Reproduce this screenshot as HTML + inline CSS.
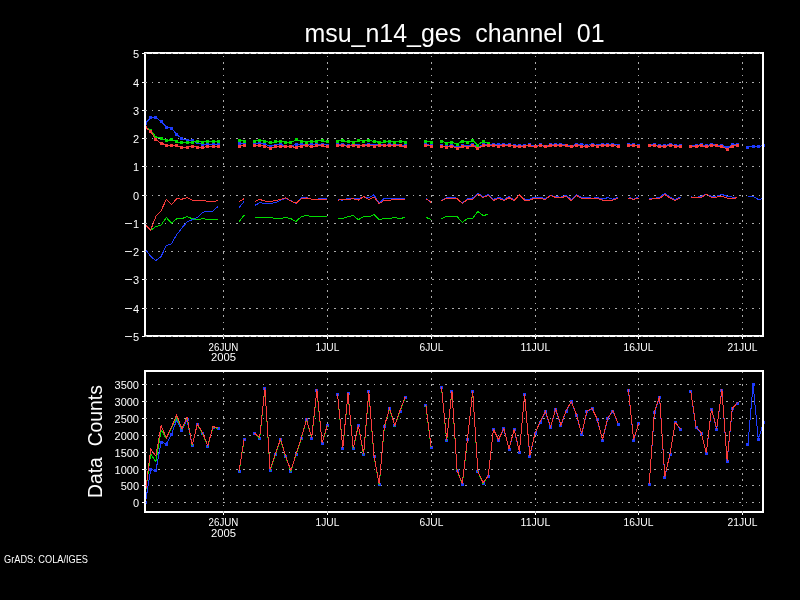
<!DOCTYPE html>
<html><head><meta charset="utf-8"><title>msu_n14_ges channel 01</title>
<style>html,body{margin:0;padding:0;background:#000;overflow:hidden}svg{display:block}</style></head>
<body>
<svg width="800" height="600" viewBox="0 0 800 600">
<rect width="800" height="600" fill="#000"/>
<defs><clipPath id="fc"><path d="M144 52h620v2h-620zM144 335h620v2h-620zM144 52h2v285h-2zM762 52h2v285h-2zM144 370h620v2h-620zM144 511h620v2h-620zM144 370h2v143h-2zM762 370h2v143h-2z"/></clipPath></defs>
<g id="grid">
<g stroke="#aaaaaa" stroke-width="1" fill="none" shape-rendering="crispEdges" stroke-dasharray="1.6 4.93">
<line x1="145" x2="763" y1="336.5" y2="336.5"/>
<line x1="145" x2="763" y1="308.5" y2="308.5"/>
<line x1="145" x2="763" y1="279.5" y2="279.5"/>
<line x1="145" x2="763" y1="251.5" y2="251.5"/>
<line x1="145" x2="763" y1="223.5" y2="223.5"/>
<line x1="145" x2="763" y1="195.5" y2="195.5"/>
<line x1="145" x2="763" y1="166.5" y2="166.5"/>
<line x1="145" x2="763" y1="138.5" y2="138.5"/>
<line x1="145" x2="763" y1="110.5" y2="110.5"/>
<line x1="145" x2="763" y1="82.5" y2="82.5"/>
<line x1="145" x2="763" y1="53.5" y2="53.5"/>
<line x1="145" x2="763" y1="502.5" y2="502.5"/>
<line x1="145" x2="763" y1="485.5" y2="485.5"/>
<line x1="145" x2="763" y1="469.5" y2="469.5"/>
<line x1="145" x2="763" y1="452.5" y2="452.5"/>
<line x1="145" x2="763" y1="435.5" y2="435.5"/>
<line x1="145" x2="763" y1="418.5" y2="418.5"/>
<line x1="145" x2="763" y1="401.5" y2="401.5"/>
<line x1="145" x2="763" y1="384.5" y2="384.5"/>
</g>
<g stroke="#aaaaaa" stroke-width="1" fill="none" shape-rendering="crispEdges" stroke-dasharray="1.6 4.733">
<line x1="223.5" x2="223.5" y1="52" y2="337" stroke-dashoffset="2.533"/>
<line x1="223.5" x2="223.5" y1="370" y2="513" stroke-dashoffset="4.533"/>
<line x1="327.5" x2="327.5" y1="52" y2="337" stroke-dashoffset="2.533"/>
<line x1="327.5" x2="327.5" y1="370" y2="513" stroke-dashoffset="4.533"/>
<line x1="431.5" x2="431.5" y1="52" y2="337" stroke-dashoffset="2.533"/>
<line x1="431.5" x2="431.5" y1="370" y2="513" stroke-dashoffset="4.533"/>
<line x1="535.5" x2="535.5" y1="52" y2="337" stroke-dashoffset="2.533"/>
<line x1="535.5" x2="535.5" y1="370" y2="513" stroke-dashoffset="4.533"/>
<line x1="638.5" x2="638.5" y1="52" y2="337" stroke-dashoffset="2.533"/>
<line x1="638.5" x2="638.5" y1="370" y2="513" stroke-dashoffset="4.533"/>
<line x1="742.5" x2="742.5" y1="52" y2="337" stroke-dashoffset="2.533"/>
<line x1="742.5" x2="742.5" y1="370" y2="513" stroke-dashoffset="4.533"/>
</g>
</g>
<g fill="none" stroke-width="1" shape-rendering="crispEdges">
<polyline points="145.5,123.2 150.7,117.7 155.9,117.7 161.1,121.5 166.3,127.0 171.5,128.2 176.7,134.5 181.9,138.7 187.0,140.2 192.2,140.8 197.4,142.7 202.6,144.2 207.8,144.2 213.0,144.0 218.2,144.4" stroke="#1e3cff"/>
<polyline points="239.0,143.8 244.2,143.6" stroke="#1e3cff"/>
<polyline points="254.6,143.6 259.7,143.4 264.9,144.0 270.1,146.4 275.3,145.0 280.5,144.4 285.7,146.0 290.9,146.4 296.1,144.0 301.3,144.2 306.5,144.6 311.7,144.8 316.9,144.2 322.1,144.0 327.3,145.2" stroke="#1e3cff"/>
<polyline points="337.6,144.9 342.8,144.7 348.0,145.5 353.2,144.6 358.4,145.1 363.6,145.1 368.8,144.4 374.0,145.2 379.2,144.3 384.4,145.3 389.6,144.7 394.8,144.4 400.0,145.1 405.1,145.3" stroke="#1e3cff"/>
<polyline points="425.9,144.8 431.1,145.2" stroke="#1e3cff"/>
<polyline points="441.5,145.5 446.7,146.9 451.9,144.9 457.1,147.5 462.3,145.7 467.5,146.0 472.7,144.3 477.9,147.3 483.0,144.3 488.2,144.2 493.4,144.5 498.6,144.8 503.8,144.2 509.0,144.5 514.2,145.6 519.4,145.6 524.6,145.2 529.8,144.9 535.0,146.3 540.2,144.6 545.4,146.0 550.6,144.5 555.7,144.4 560.9,144.3 566.1,145.1 571.3,146.1 576.5,144.2 581.7,144.9 586.9,145.2 592.1,144.7 597.3,145.2 602.5,144.4 607.7,144.1 612.9,144.2 618.1,145.3" stroke="#1e3cff"/>
<polyline points="628.4,144.9 633.6,144.9 638.8,145.7" stroke="#1e3cff"/>
<polyline points="649.2,145.2 654.4,144.7 659.6,145.7 664.8,145.6 670.0,144.2 675.2,145.5 680.4,145.3" stroke="#1e3cff"/>
<polyline points="690.8,146.1 696.0,145.7 701.2,144.6 706.3,145.9 711.5,144.1 716.7,145.1 721.9,145.2 727.1,147.8 732.3,144.9 737.5,144.0" stroke="#1e3cff"/>
<polyline points="747.9,147.2 753.1,146.2 758.3,146.4 763.5,145.6" stroke="#1e3cff"/>

<path fill="#1e3cff" d="M144 122h3v3h-3zM149 116h3v3h-3zM154 116h3v3h-3zM160 120h3v3h-3zM165 126h3v3h-3zM170 127h3v3h-3zM175 133h3v3h-3zM180 137h3v3h-3zM186 139h3v3h-3zM191 139h3v3h-3zM196 141h3v3h-3zM201 143h3v3h-3zM206 143h3v3h-3zM212 143h3v3h-3zM217 143h3v3h-3zM238 142h3v3h-3zM243 142h3v3h-3zM253 142h3v3h-3zM258 142h3v3h-3zM263 143h3v3h-3zM269 145h3v3h-3zM274 144h3v3h-3zM279 143h3v3h-3zM284 145h3v3h-3zM289 145h3v3h-3zM295 143h3v3h-3zM300 143h3v3h-3zM305 143h3v3h-3zM310 143h3v3h-3zM315 143h3v3h-3zM321 143h3v3h-3zM326 144h3v3h-3zM336 143h3v3h-3zM341 143h3v3h-3zM347 144h3v3h-3zM352 143h3v3h-3zM357 144h3v3h-3zM362 144h3v3h-3zM367 143h3v3h-3zM373 144h3v3h-3zM378 143h3v3h-3zM383 144h3v3h-3zM388 143h3v3h-3zM393 143h3v3h-3zM399 144h3v3h-3zM404 144h3v3h-3zM424 143h3v3h-3zM430 144h3v3h-3zM440 144h3v3h-3zM445 145h3v3h-3zM450 143h3v3h-3zM456 146h3v3h-3zM461 144h3v3h-3zM466 145h3v3h-3zM471 143h3v3h-3zM476 146h3v3h-3zM482 143h3v3h-3zM487 143h3v3h-3zM492 143h3v3h-3zM497 143h3v3h-3zM502 143h3v3h-3zM508 143h3v3h-3zM513 144h3v3h-3zM518 144h3v3h-3zM523 144h3v3h-3zM528 143h3v3h-3zM534 145h3v3h-3zM539 143h3v3h-3zM544 145h3v3h-3zM549 143h3v3h-3zM554 143h3v3h-3zM559 143h3v3h-3zM565 144h3v3h-3zM570 145h3v3h-3zM575 143h3v3h-3zM580 143h3v3h-3zM585 144h3v3h-3zM591 143h3v3h-3zM596 144h3v3h-3zM601 143h3v3h-3zM606 143h3v3h-3zM611 143h3v3h-3zM617 144h3v3h-3zM627 143h3v3h-3zM632 143h3v3h-3zM637 144h3v3h-3zM648 144h3v3h-3zM653 143h3v3h-3zM658 144h3v3h-3zM663 144h3v3h-3zM669 143h3v3h-3zM674 144h3v3h-3zM679 144h3v3h-3zM689 145h3v3h-3zM695 144h3v3h-3zM700 143h3v3h-3zM705 144h3v3h-3zM710 143h3v3h-3zM715 144h3v3h-3zM720 144h3v3h-3zM726 146h3v3h-3zM731 143h3v3h-3zM736 143h3v3h-3zM746 146h3v3h-3zM752 145h3v3h-3zM757 145h3v3h-3zM762 144h3v3h-3z"/>

<polyline points="145.5,127.7 150.7,130.0 155.9,137.2 161.1,138.2 166.3,140.5 171.5,139.7 176.7,141.7 181.9,142.7 187.0,142.4 192.2,142.4 197.4,141.2 202.6,142.4 207.8,141.2 213.0,141.3 218.2,141.4" stroke="#00dc00"/>
<polyline points="239.0,140.0 244.2,141.2" stroke="#00dc00"/>
<polyline points="254.6,141.0 259.7,140.3 264.9,141.0 270.1,142.6 275.3,141.8 280.5,141.0 285.7,142.4 290.9,142.4 296.1,139.8 301.3,141.0 306.5,142.0 311.7,141.6 316.9,141.0 322.1,140.8 327.3,141.8" stroke="#00dc00"/>
<polyline points="337.6,141.0 342.8,140.6 348.0,141.8 353.2,142.0 358.4,140.8 363.6,141.0 368.8,140.6 374.0,141.2 379.2,142.4 384.4,141.8 389.6,141.2 394.8,142.0 400.0,141.0 405.1,142.0" stroke="#00dc00"/>
<polyline points="425.9,141.2 431.1,142.0" stroke="#00dc00"/>
<polyline points="441.5,141.2 446.7,143.0 451.9,142.2 457.1,144.0 462.3,141.0 467.5,142.2 472.7,140.5 477.9,145.0 483.0,141.2 488.2,143.0" stroke="#00dc00"/>

<path fill="#00dc00" d="M144 126h3v3h-3zM149 129h3v3h-3zM154 136h3v3h-3zM160 137h3v3h-3zM165 139h3v3h-3zM170 138h3v3h-3zM175 140h3v3h-3zM180 141h3v3h-3zM186 141h3v3h-3zM191 141h3v3h-3zM196 140h3v3h-3zM201 141h3v3h-3zM206 140h3v3h-3zM212 140h3v3h-3zM217 140h3v3h-3zM238 139h3v3h-3zM243 140h3v3h-3zM253 140h3v3h-3zM258 139h3v3h-3zM263 140h3v3h-3zM269 141h3v3h-3zM274 140h3v3h-3zM279 140h3v3h-3zM284 141h3v3h-3zM289 141h3v3h-3zM295 138h3v3h-3zM300 140h3v3h-3zM305 141h3v3h-3zM310 140h3v3h-3zM315 140h3v3h-3zM321 139h3v3h-3zM326 140h3v3h-3zM336 140h3v3h-3zM341 139h3v3h-3zM347 140h3v3h-3zM352 141h3v3h-3zM357 139h3v3h-3zM362 140h3v3h-3zM367 139h3v3h-3zM373 140h3v3h-3zM378 141h3v3h-3zM383 140h3v3h-3zM388 140h3v3h-3zM393 141h3v3h-3zM399 140h3v3h-3zM404 141h3v3h-3zM424 140h3v3h-3zM430 141h3v3h-3zM440 140h3v3h-3zM445 142h3v3h-3zM450 141h3v3h-3zM456 143h3v3h-3zM461 140h3v3h-3zM466 141h3v3h-3zM471 139h3v3h-3zM476 144h3v3h-3zM482 140h3v3h-3zM487 142h3v3h-3z"/>

<polyline points="145.5,127.5 150.7,131.5 155.9,139.7 161.1,143.2 166.3,145.0 171.5,145.4 176.7,145.7 181.9,147.5 187.0,147.5 192.2,146.0 197.4,147.0 202.6,147.5 207.8,146.5 213.0,146.5 218.2,146.5" stroke="#fa3c3c"/>
<polyline points="239.0,146.4 244.2,145.0" stroke="#fa3c3c"/>
<polyline points="254.6,145.6 259.7,145.6 264.9,146.0 270.1,148.4 275.3,146.6 280.5,146.0 285.7,146.6 290.9,146.2 296.1,147.8 301.3,146.0 306.5,145.6 311.7,146.6 316.9,145.8 322.1,145.6 327.3,146.8" stroke="#fa3c3c"/>
<polyline points="337.6,145.7 342.8,145.4 348.0,146.3 353.2,145.2 358.4,146.1 363.6,145.8 368.8,145.2 374.0,146.0 379.2,145.2 384.4,145.9 389.6,145.2 394.8,145.3 400.0,145.9 405.1,146.6" stroke="#fa3c3c"/>
<polyline points="425.9,145.5 431.1,146.0" stroke="#fa3c3c"/>
<polyline points="441.5,146.0 446.7,147.5 451.9,146.0 457.1,148.5 462.3,146.5 467.5,147.3 472.7,145.2 477.9,148.5 483.0,145.5 488.2,145.5 493.4,145.2 498.6,146.0 503.8,145.3 509.0,145.5 514.2,146.2 519.4,146.8 524.6,146.1 529.8,145.8 535.0,146.9 540.2,145.2 545.4,146.6 550.6,145.6 555.7,145.4 560.9,145.3 566.1,145.7 571.3,146.6 576.5,145.4 581.7,146.1 586.9,146.3 592.1,145.8 597.3,146.1 602.5,145.2 607.7,145.2 612.9,145.5 618.1,146.3" stroke="#fa3c3c"/>
<polyline points="628.4,145.9 633.6,145.7 638.8,146.2" stroke="#fa3c3c"/>
<polyline points="649.2,145.9 654.4,145.6 659.6,146.5 664.8,146.4 670.0,145.5 675.2,146.1 680.4,146.0" stroke="#fa3c3c"/>
<polyline points="690.8,146.7 696.0,146.4 701.2,145.6 706.3,146.9 711.5,145.3 716.7,145.9 721.9,146.5 727.1,149.0 732.3,146.0 737.5,145.2" stroke="#fa3c3c"/>

<path fill="#fa3c3c" d="M144 126h3v3h-3zM149 130h3v3h-3zM154 138h3v3h-3zM160 142h3v3h-3zM165 144h3v3h-3zM170 144h3v3h-3zM175 144h3v3h-3zM180 146h3v3h-3zM186 146h3v3h-3zM191 145h3v3h-3zM196 146h3v3h-3zM201 146h3v3h-3zM206 145h3v3h-3zM212 145h3v3h-3zM217 145h3v3h-3zM238 145h3v3h-3zM243 144h3v3h-3zM253 144h3v3h-3zM258 144h3v3h-3zM263 145h3v3h-3zM269 147h3v3h-3zM274 145h3v3h-3zM279 145h3v3h-3zM284 145h3v3h-3zM289 145h3v3h-3zM295 146h3v3h-3zM300 145h3v3h-3zM305 144h3v3h-3zM310 145h3v3h-3zM315 144h3v3h-3zM321 144h3v3h-3zM326 145h3v3h-3zM336 144h3v3h-3zM341 144h3v3h-3zM347 145h3v3h-3zM352 144h3v3h-3zM357 145h3v3h-3zM362 144h3v3h-3zM367 144h3v3h-3zM373 145h3v3h-3zM378 144h3v3h-3zM383 144h3v3h-3zM388 144h3v3h-3zM393 144h3v3h-3zM399 144h3v3h-3zM404 145h3v3h-3zM424 144h3v3h-3zM430 145h3v3h-3zM440 145h3v3h-3zM445 146h3v3h-3zM450 145h3v3h-3zM456 147h3v3h-3zM461 145h3v3h-3zM466 146h3v3h-3zM471 144h3v3h-3zM476 147h3v3h-3zM482 144h3v3h-3zM487 144h3v3h-3zM492 144h3v3h-3zM497 145h3v3h-3zM502 144h3v3h-3zM508 144h3v3h-3zM513 145h3v3h-3zM518 145h3v3h-3zM523 145h3v3h-3zM528 144h3v3h-3zM534 145h3v3h-3zM539 144h3v3h-3zM544 145h3v3h-3zM549 144h3v3h-3zM554 144h3v3h-3zM559 144h3v3h-3zM565 144h3v3h-3zM570 145h3v3h-3zM575 144h3v3h-3zM580 145h3v3h-3zM585 145h3v3h-3zM591 144h3v3h-3zM596 145h3v3h-3zM601 144h3v3h-3zM606 144h3v3h-3zM611 144h3v3h-3zM617 145h3v3h-3zM627 144h3v3h-3zM632 144h3v3h-3zM637 145h3v3h-3zM648 144h3v3h-3zM653 144h3v3h-3zM658 145h3v3h-3zM663 145h3v3h-3zM669 144h3v3h-3zM674 145h3v3h-3zM679 145h3v3h-3zM689 145h3v3h-3zM695 145h3v3h-3zM700 144h3v3h-3zM705 145h3v3h-3zM710 144h3v3h-3zM715 144h3v3h-3zM720 145h3v3h-3zM726 148h3v3h-3zM731 145h3v3h-3zM736 144h3v3h-3z"/>

<polyline points="145.5,225.0 150.7,230.5 155.9,226.5 161.1,225.0 166.3,217.5 171.5,223.2 176.7,218.7 181.9,218.7 187.0,216.5 192.2,218.7 197.4,219.5 202.6,218.7 207.8,219.5 213.0,219.5 218.2,219.5" stroke="#00dc00"/>
<polyline points="239.0,221.7 244.2,215.2" stroke="#00dc00"/>
<polyline points="254.6,217.5 259.7,217.5 264.9,217.5 270.1,217.5 275.3,218.5 280.5,218.5 285.7,217.5 290.9,218.7 296.1,221.5 301.3,216.5 306.5,215.5 311.7,216.5 316.9,216.5 322.1,216.5 327.3,216.5" stroke="#00dc00"/>
<polyline points="337.6,218.5 342.8,218.5 348.0,216.5 353.2,215.5 358.4,219.7 363.6,216.5 368.8,217.0 374.0,214.5 379.2,219.5 384.4,218.5 389.6,218.5 394.8,217.5 400.0,218.5 405.1,217.5" stroke="#00dc00"/>
<polyline points="425.9,217.2 431.1,219.7" stroke="#00dc00"/>
<polyline points="441.5,218.5 446.7,216.5 451.9,216.5 457.1,216.5 462.3,222.5 467.5,218.5 472.7,218.3 477.9,211.5 483.0,215.5 488.2,214.5" stroke="#00dc00"/>

<polyline points="145.5,249.3 150.7,256.5 155.9,260.5 161.1,256.5 166.3,245.5 171.5,243.7 176.7,234.7 181.9,228.0 187.0,222.0 192.2,219.7 197.4,217.5 202.6,212.2 207.8,211.5 213.0,211.2 218.2,206.2" stroke="#1e3cff"/>
<polyline points="239.0,207.7 244.2,201.4" stroke="#1e3cff"/>
<polyline points="254.6,205.5 259.7,202.8 264.9,203.2 270.1,203.2 275.3,202.8 280.5,200.2 285.7,198.3 290.9,200.7 296.1,203.5 301.3,197.7 306.5,197.5 311.7,199.2 316.9,199.2 322.1,198.5 327.3,198.5" stroke="#1e3cff"/>
<polyline points="337.6,199.5 342.8,200.2 348.0,198.5 353.2,198.5 358.4,198.5 363.6,196.8 368.8,197.7 374.0,194.7 379.2,203.5 384.4,198.0 389.6,198.7 394.8,198.2 400.0,199.0 405.1,198.7" stroke="#1e3cff"/>
<polyline points="425.9,198.3 431.1,202.0" stroke="#1e3cff"/>
<polyline points="441.5,200.2 446.7,197.5 451.9,197.3 457.1,198.2 462.3,203.2 467.5,198.7 472.7,198.0 477.9,193.0 483.0,196.7 488.2,194.5 493.4,199.5 498.6,197.1 503.8,199.5 509.0,196.7 514.2,200.2 519.4,194.4 524.6,199.2 529.8,199.2 535.0,197.0 540.2,197.5 545.4,198.5 550.6,195.2 555.7,196.7 560.9,197.2 566.1,195.5 571.3,199.5 576.5,194.5 581.7,197.7 586.9,197.3 592.1,198.2 597.3,197.7 602.5,199.0 607.7,197.7 612.9,199.2 618.1,197.5" stroke="#1e3cff"/>
<polyline points="628.4,196.8 633.6,199.2 638.8,196.8" stroke="#1e3cff"/>
<polyline points="649.2,198.8 654.4,198.2 659.6,197.5 664.8,193.3 670.0,197.0 675.2,199.7 680.4,197.0" stroke="#1e3cff"/>
<polyline points="690.8,196.8 696.0,197.5 701.2,196.2 706.3,194.4 711.5,196.2 716.7,196.0 721.9,194.5 727.1,196.2 732.3,197.0 737.5,198.2" stroke="#1e3cff"/>
<polyline points="747.9,196.5 753.1,196.5 758.3,199.5 763.5,198.5" stroke="#1e3cff"/>

<polyline points="145.5,225.0 150.7,230.0 155.9,216.3 161.1,210.7 166.3,199.5 171.5,204.5 176.7,198.7 181.9,199.2 187.0,197.7 192.2,200.2 197.4,200.2 202.6,200.2 207.8,201.3 213.0,201.4 218.2,200.7" stroke="#fa3c3c"/>
<polyline points="239.0,201.4 244.2,198.7" stroke="#fa3c3c"/>
<polyline points="254.6,201.4 259.7,199.5 264.9,201.0 270.1,201.4 275.3,200.7 280.5,199.5 285.7,197.7 290.9,201.0 296.1,203.2 301.3,198.7 306.5,198.0 311.7,199.2 316.9,199.2 322.1,199.2 327.3,199.2" stroke="#fa3c3c"/>
<polyline points="337.6,200.2 342.8,199.5 348.0,199.5 353.2,198.7 358.4,200.2 363.6,196.5 368.8,199.5 374.0,197.0 379.2,203.7 384.4,200.2 389.6,200.2 394.8,199.2 400.0,199.5 405.1,199.5" stroke="#fa3c3c"/>
<polyline points="425.9,198.7 431.1,202.5" stroke="#fa3c3c"/>
<polyline points="441.5,200.5 446.7,198.5 451.9,198.5 457.1,198.5 462.3,203.5 467.5,199.5 472.7,199.2 477.9,194.0 483.0,197.5 488.2,195.5 493.4,200.5 498.6,198.3 503.8,200.5 509.0,197.7 514.2,200.5 519.4,194.7 524.6,200.2 529.8,200.2 535.0,198.0 540.2,198.5 545.4,199.5 550.6,195.5 555.7,197.5 560.9,197.5 566.1,196.5 571.3,200.5 576.5,195.5 581.7,198.5 586.9,198.5 592.1,198.5 597.3,198.5 602.5,200.2 607.7,200.2 612.9,200.2 618.1,198.3" stroke="#fa3c3c"/>
<polyline points="628.4,198.0 633.6,199.5 638.8,198.0" stroke="#fa3c3c"/>
<polyline points="649.2,199.8 654.4,198.5 659.6,198.5 664.8,194.5 670.0,198.0 675.2,200.5 680.4,198.0" stroke="#fa3c3c"/>
<polyline points="690.8,197.5 696.0,197.5 701.2,197.5 706.3,194.0 711.5,197.5 716.7,197.0 721.9,196.0 727.1,198.2 732.3,198.5 737.5,197.7" stroke="#fa3c3c"/>

<polyline points="145.5,502.0 150.7,469.4 155.9,470.6 161.1,442.0 166.3,444.0 171.5,434.0 176.7,420.0 181.9,430.6 187.0,419.4 192.2,445.5 197.4,424.5 202.6,433.5 207.8,446.1 213.0,427.1 218.2,428.5" stroke="#1e3cff"/>
<polyline points="239.0,471.9 244.2,439.0" stroke="#1e3cff"/>
<polyline points="254.6,433.8 259.7,438.0 264.9,388.3 270.1,470.7 275.3,454.8 280.5,439.7 285.7,456.7 290.9,471.2 296.1,454.4 301.3,438.5 306.5,419.8 311.7,438.0 316.9,390.0 322.1,443.2 327.3,425.7" stroke="#1e3cff"/>
<polyline points="337.6,394.9 342.8,448.3 348.0,393.7 353.2,448.8 358.4,425.7 363.6,454.8 368.8,391.8 374.0,456.0 379.2,484.7 384.4,426.4 389.6,408.9 394.8,425.7 400.0,411.0 405.1,397.7" stroke="#1e3cff"/>
<polyline points="425.9,405.8 431.1,447.4" stroke="#1e3cff"/>
<polyline points="441.5,387.6 446.7,440.8 451.9,391.1 457.1,470.7 462.3,484.0 467.5,439.0 472.7,391.8 477.9,471.6 483.0,483.3 488.2,476.3 493.4,429.9 498.6,440.1 503.8,428.9 509.0,449.0 514.2,429.9 519.4,452.0 524.6,394.6 529.8,456.0 535.0,433.8 540.2,422.2 545.4,411.7 550.6,427.3 555.7,409.3 560.9,425.7 566.1,411.0 571.3,401.9 576.5,415.2 581.7,434.3 586.9,411.7 592.1,408.9 597.3,419.8 602.5,440.1 607.7,418.7 612.9,411.0 618.1,424.0" stroke="#1e3cff"/>
<polyline points="628.4,390.0 633.6,440.1 638.8,423.5" stroke="#1e3cff"/>
<polyline points="649.2,484.7 654.4,412.4 659.6,397.0 664.8,477.0 670.0,454.4 675.2,422.9 680.4,429.2" stroke="#1e3cff"/>
<polyline points="690.8,391.8 696.0,427.3 701.2,433.1 706.3,453.2 711.5,409.3 716.7,429.2 721.9,390.0 727.1,461.1 732.3,408.9 737.5,403.0" stroke="#1e3cff"/>
<polyline points="747.9,444.5 753.1,384.3 758.3,439.6 763.5,422.4" stroke="#1e3cff"/>

<path fill="#1e3cff" d="M144 501h3v3h-3zM149 468h3v3h-3zM154 469h3v3h-3zM160 441h3v3h-3zM165 443h3v3h-3zM170 433h3v3h-3zM175 419h3v3h-3zM180 429h3v3h-3zM186 418h3v3h-3zM191 444h3v3h-3zM196 423h3v3h-3zM201 432h3v3h-3zM206 445h3v3h-3zM212 426h3v3h-3zM217 427h3v3h-3zM238 470h3v3h-3zM243 438h3v3h-3zM253 432h3v3h-3zM258 437h3v3h-3zM263 387h3v3h-3zM269 469h3v3h-3zM274 453h3v3h-3zM279 438h3v3h-3zM284 455h3v3h-3zM289 470h3v3h-3zM295 453h3v3h-3zM300 437h3v3h-3zM305 418h3v3h-3zM310 437h3v3h-3zM315 389h3v3h-3zM321 442h3v3h-3zM326 424h3v3h-3zM336 393h3v3h-3zM341 447h3v3h-3zM347 392h3v3h-3zM352 447h3v3h-3zM357 424h3v3h-3zM362 453h3v3h-3zM367 390h3v3h-3zM373 455h3v3h-3zM378 483h3v3h-3zM383 425h3v3h-3zM388 407h3v3h-3zM393 424h3v3h-3zM399 410h3v3h-3zM404 396h3v3h-3zM424 404h3v3h-3zM430 446h3v3h-3zM440 386h3v3h-3zM445 439h3v3h-3zM450 390h3v3h-3zM456 469h3v3h-3zM461 483h3v3h-3zM466 438h3v3h-3zM471 390h3v3h-3zM476 470h3v3h-3zM482 482h3v3h-3zM487 475h3v3h-3zM492 428h3v3h-3zM497 439h3v3h-3zM502 427h3v3h-3zM508 448h3v3h-3zM513 428h3v3h-3zM518 451h3v3h-3zM523 393h3v3h-3zM528 455h3v3h-3zM534 432h3v3h-3zM539 421h3v3h-3zM544 410h3v3h-3zM549 426h3v3h-3zM554 408h3v3h-3zM559 424h3v3h-3zM565 410h3v3h-3zM570 400h3v3h-3zM575 414h3v3h-3zM580 433h3v3h-3zM585 410h3v3h-3zM591 407h3v3h-3zM596 418h3v3h-3zM601 439h3v3h-3zM606 417h3v3h-3zM611 410h3v3h-3zM617 423h3v3h-3zM627 389h3v3h-3zM632 439h3v3h-3zM637 422h3v3h-3zM648 483h3v3h-3zM653 411h3v3h-3zM658 396h3v3h-3zM663 476h3v3h-3zM669 453h3v3h-3zM674 421h3v3h-3zM679 428h3v3h-3zM689 390h3v3h-3zM695 426h3v3h-3zM700 432h3v3h-3zM705 452h3v3h-3zM710 408h3v3h-3zM715 428h3v3h-3zM720 389h3v3h-3zM726 460h3v3h-3zM731 407h3v3h-3zM736 402h3v3h-3zM746 443h3v3h-3zM752 383h3v3h-3zM757 438h3v3h-3zM762 421h3v3h-3z"/>

<polyline points="145.5,492.4 150.7,454.0 155.9,462.0 161.1,430.0 166.3,438.6 171.5,428.0 176.7,418.0 181.9,429.6 187.0,417.6 192.2,445.6 197.4,424.6 202.6,433.6 207.8,446.2 213.0,427.2 218.2,428.6" stroke="#00dc00"/>
<polyline points="239.0,472.0 244.2,439.1" stroke="#00dc00"/>
<polyline points="254.6,433.9 259.7,438.1 264.9,388.4 270.1,470.8 275.3,454.9 280.5,439.8 285.7,456.8 290.9,471.3 296.1,454.5 301.3,438.6 306.5,419.9 311.7,438.1 316.9,390.1 322.1,443.3 327.3,425.8" stroke="#00dc00"/>
<polyline points="337.6,395.0 342.8,448.4 348.0,393.8 353.2,448.9 358.4,425.8 363.6,454.9 368.8,391.9 374.0,456.1 379.2,484.8 384.4,426.5 389.6,409.0 394.8,425.8 400.0,411.1 405.1,397.8" stroke="#00dc00"/>
<polyline points="425.9,405.9 431.1,447.5" stroke="#00dc00"/>
<polyline points="441.5,387.7 446.7,440.9 451.9,391.2 457.1,470.8 462.3,484.1 467.5,439.1 472.7,391.9 477.9,471.7 483.0,483.4 488.2,476.4" stroke="#00dc00"/>

<polyline points="145.5,492.4 150.7,449.0 155.9,456.0 161.1,425.4 166.3,438.0 171.5,427.0 176.7,415.0 181.9,429.0 187.0,417.0 192.2,445.0 197.4,424.0 202.6,433.0 207.8,445.6 213.0,426.6 218.2,428.0" stroke="#fa3c3c"/>
<polyline points="239.0,471.4 244.2,438.5" stroke="#fa3c3c"/>
<polyline points="254.6,433.3 259.7,437.5 264.9,387.8 270.1,470.2 275.3,454.3 280.5,439.2 285.7,456.2 290.9,470.7 296.1,453.9 301.3,438.0 306.5,419.3 311.7,437.5 316.9,389.5 322.1,442.7 327.3,425.2" stroke="#fa3c3c"/>
<polyline points="337.6,394.4 342.8,447.8 348.0,393.2 353.2,448.3 358.4,425.2 363.6,454.3 368.8,391.3 374.0,455.5 379.2,484.2 384.4,425.9 389.6,408.4 394.8,425.2 400.0,410.5 405.1,397.2" stroke="#fa3c3c"/>
<polyline points="425.9,405.3 431.1,446.9" stroke="#fa3c3c"/>
<polyline points="441.5,387.1 446.7,440.3 451.9,390.6 457.1,470.2 462.3,483.5 467.5,438.5 472.7,391.3 477.9,471.1 483.0,482.8 488.2,475.8 493.4,429.4 498.6,439.6 503.8,428.4 509.0,448.5 514.2,429.4 519.4,451.5 524.6,394.1 529.8,455.5 535.0,433.3 540.2,421.7 545.4,411.2 550.6,426.8 555.7,408.8 560.9,425.2 566.1,410.5 571.3,401.4 576.5,414.7 581.7,433.8 586.9,411.2 592.1,408.4 597.3,419.3 602.5,439.6 607.7,418.2 612.9,410.5 618.1,423.5" stroke="#fa3c3c"/>
<polyline points="628.4,389.5 633.6,439.6 638.8,423.0" stroke="#fa3c3c"/>
<polyline points="649.2,484.2 654.4,411.9 659.6,396.5 664.8,476.5 670.0,453.9 675.2,422.4 680.4,428.7" stroke="#fa3c3c"/>
<polyline points="690.8,391.3 696.0,426.8 701.2,432.6 706.3,452.7 711.5,408.8 716.7,428.7 721.9,389.5 727.1,460.6 732.3,408.4 737.5,402.5" stroke="#fa3c3c"/>

</g>
<g fill="none" stroke="#fff" stroke-width="2" shape-rendering="crispEdges">
<rect x="145" y="53" width="618" height="283"/>
<rect x="145" y="371" width="618" height="141"/>
</g>
<use href="#grid" clip-path="url(#fc)"/>
<g stroke="#fff" stroke-width="1" shape-rendering="crispEdges">
<line x1="142" x2="144" y1="336.5" y2="336.5"/>
<line x1="142" x2="144" y1="308.5" y2="308.5"/>
<line x1="142" x2="144" y1="279.5" y2="279.5"/>
<line x1="142" x2="144" y1="251.5" y2="251.5"/>
<line x1="142" x2="144" y1="223.5" y2="223.5"/>
<line x1="142" x2="144" y1="195.5" y2="195.5"/>
<line x1="142" x2="144" y1="166.5" y2="166.5"/>
<line x1="142" x2="144" y1="138.5" y2="138.5"/>
<line x1="142" x2="144" y1="110.5" y2="110.5"/>
<line x1="142" x2="144" y1="82.5" y2="82.5"/>
<line x1="142" x2="144" y1="53.5" y2="53.5"/>
<line x1="142" x2="144" y1="502.5" y2="502.5"/>
<line x1="142" x2="144" y1="485.5" y2="485.5"/>
<line x1="142" x2="144" y1="469.5" y2="469.5"/>
<line x1="142" x2="144" y1="452.5" y2="452.5"/>
<line x1="142" x2="144" y1="435.5" y2="435.5"/>
<line x1="142" x2="144" y1="418.5" y2="418.5"/>
<line x1="142" x2="144" y1="401.5" y2="401.5"/>
<line x1="142" x2="144" y1="384.5" y2="384.5"/>
<line x1="223.5" x2="223.5" y1="337" y2="339"/>
<line x1="223.5" x2="223.5" y1="513" y2="515"/>
<line x1="327.5" x2="327.5" y1="337" y2="339"/>
<line x1="327.5" x2="327.5" y1="513" y2="515"/>
<line x1="431.5" x2="431.5" y1="337" y2="339"/>
<line x1="431.5" x2="431.5" y1="513" y2="515"/>
<line x1="535.5" x2="535.5" y1="337" y2="339"/>
<line x1="535.5" x2="535.5" y1="513" y2="515"/>
<line x1="638.5" x2="638.5" y1="337" y2="339"/>
<line x1="638.5" x2="638.5" y1="513" y2="515"/>
<line x1="742.5" x2="742.5" y1="337" y2="339"/>
<line x1="742.5" x2="742.5" y1="513" y2="515"/>
</g>
<g opacity="0.999" fill="#fff" font-family="'Liberation Sans', 'DejaVu Sans', sans-serif">
<text transform="translate(304.5,42) scale(0.96,1)" font-size="26" word-spacing="7.5">msu_n14_ges channel 01</text>
<g font-size="11" text-anchor="end">
<text x="139" y="340.5">5</text>
<text transform="translate(133.4,338.5) scale(2.6,1)">-</text>
<text x="139" y="312.5">4</text>
<text transform="translate(133.4,310.5) scale(2.6,1)">-</text>
<text x="139" y="283.5">3</text>
<text transform="translate(133.4,281.5) scale(2.6,1)">-</text>
<text x="139" y="255.5">2</text>
<text transform="translate(133.4,253.5) scale(2.6,1)">-</text>
<text x="139" y="227.5">1</text>
<text transform="translate(133.4,225.5) scale(2.6,1)">-</text>
<text x="139" y="199.5">0</text>
<text x="139" y="170.5">1</text>
<text x="139" y="142.5">2</text>
<text x="139" y="114.5">3</text>
<text x="139" y="86.5">4</text>
<text x="139" y="57.5">5</text>
<text x="139" y="506.5">0</text>
<text x="139" y="489.5">500</text>
<text x="139" y="473.5">1000</text>
<text x="139" y="456.5">1500</text>
<text x="139" y="439.5">2000</text>
<text x="139" y="422.5">2500</text>
<text x="139" y="405.5">3000</text>
<text x="139" y="388.5">3500</text>
</g>
<g font-size="11" text-anchor="middle">
<text x="223.5" y="350.5" textLength="29.8" lengthAdjust="spacingAndGlyphs">26JUN</text>
<text x="223.5" y="526.0" textLength="29.8" lengthAdjust="spacingAndGlyphs">26JUN</text>
<text x="327.5" y="350.5" textLength="23.8" lengthAdjust="spacingAndGlyphs">1JUL</text>
<text x="327.5" y="526.0" textLength="23.8" lengthAdjust="spacingAndGlyphs">1JUL</text>
<text x="431.5" y="350.5" textLength="23.8" lengthAdjust="spacingAndGlyphs">6JUL</text>
<text x="431.5" y="526.0" textLength="23.8" lengthAdjust="spacingAndGlyphs">6JUL</text>
<text x="535.5" y="350.5" textLength="29.8" lengthAdjust="spacingAndGlyphs">11JUL</text>
<text x="535.5" y="526.0" textLength="29.8" lengthAdjust="spacingAndGlyphs">11JUL</text>
<text x="638.5" y="350.5" textLength="29.8" lengthAdjust="spacingAndGlyphs">16JUL</text>
<text x="638.5" y="526.0" textLength="29.8" lengthAdjust="spacingAndGlyphs">16JUL</text>
<text x="742.5" y="350.5" textLength="29.8" lengthAdjust="spacingAndGlyphs">21JUL</text>
<text x="742.5" y="526.0" textLength="29.8" lengthAdjust="spacingAndGlyphs">21JUL</text>
<text x="223.5" y="361.0" textLength="25" lengthAdjust="spacingAndGlyphs">2005</text>
<text x="223.5" y="537.0" textLength="25" lengthAdjust="spacingAndGlyphs">2005</text>
</g>
<text transform="translate(102,498) rotate(-90) scale(0.92,1)" font-size="21" word-spacing="6">Data Counts</text>
<text x="4" y="563" font-size="10.5" textLength="84" lengthAdjust="spacingAndGlyphs">GrADS: COLA/IGES</text>
</g>
</svg>
</body></html>
